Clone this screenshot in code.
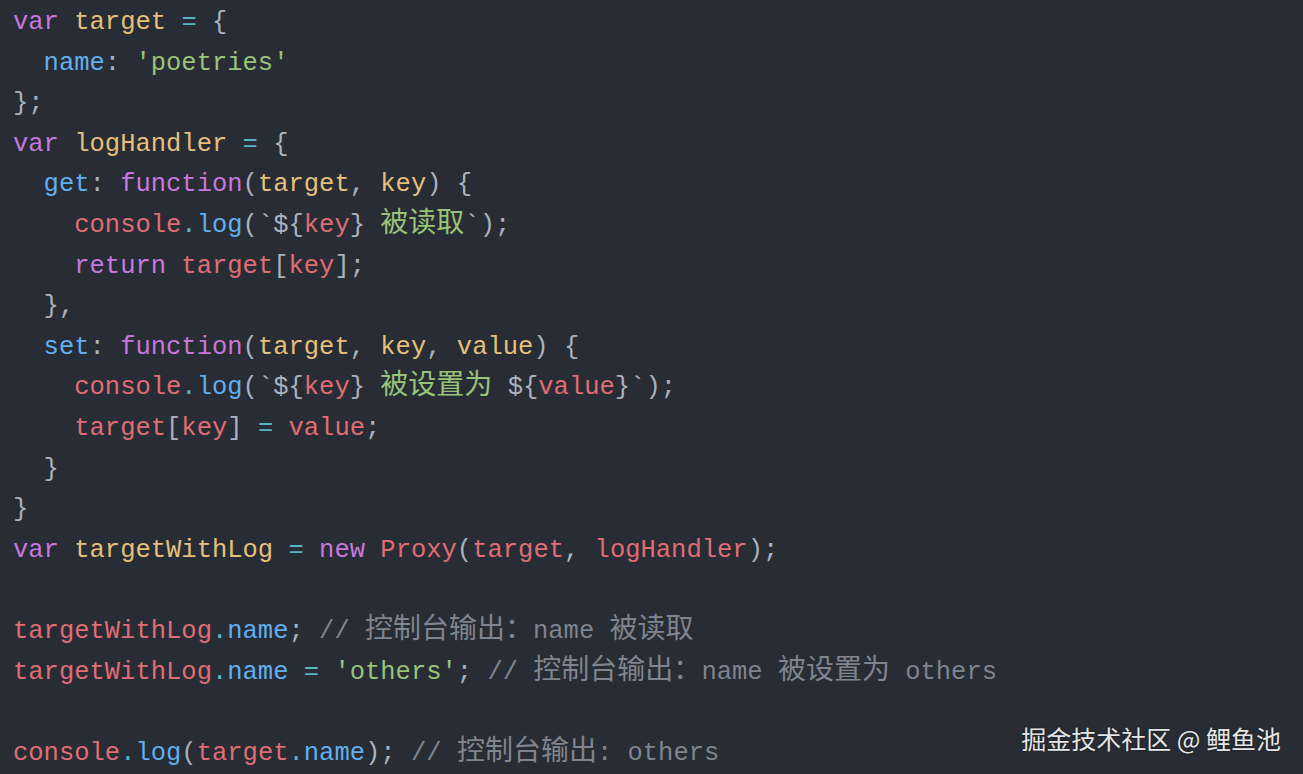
import React from "react";

type Tok = [string, string];

const K = "text-[#c678dd]"; // keyword purple
const Y = "text-[#e5c07b]"; // yellow
const C = "text-[#56b6c2]"; // cyan
const P = "text-[#abb2bf]"; // punct
const B = "text-[#61afef]"; // blue
const G = "text-[#98c379]"; // green
const R = "text-[#e06c75]"; // red
const M = "text-[#7f848e]"; // comment

const lines: Tok[][] = [
  [[K, "var"], [P, " "], [Y, "target"], [P, " "], [C, "="], [P, " {"]],
  [[P, "  "], [B, "name"], [P, ": "], [G, "'poetries'"]],
  [[P, "};"]],
  [[K, "var"], [P, " "], [Y, "logHandler"], [P, " "], [C, "="], [P, " {"]],
  [[P, "  "], [B, "get"], [P, ": "], [K, "function"], [P, "("], [Y, "target"], [P, ", "], [Y, "key"], [P, ") {"]],
  [[P, "    "], [R, "console"], [C, "."], [B, "log"], [P, "(`${"], [R, "key"], [P, "}"], [G, " 被读取"], [P, "`);"]],
  [[P, "    "], [K, "return"], [P, " "], [R, "target"], [P, "["], [R, "key"], [P, "];"]],
  [[P, "  },"]],
  [[P, "  "], [B, "set"], [P, ": "], [K, "function"], [P, "("], [Y, "target"], [P, ", "], [Y, "key"], [P, ", "], [Y, "value"], [P, ") {"]],
  [[P, "    "], [R, "console"], [C, "."], [B, "log"], [P, "(`${"], [R, "key"], [P, "}"], [G, " 被设置为 "], [P, "${"], [R, "value"], [P, "}`);"]],
  [[P, "    "], [R, "target"], [P, "["], [R, "key"], [P, "] "], [C, "="], [P, " "], [R, "value"], [P, ";"]],
  [[P, "  }"]],
  [[P, "}"]],
  [[K, "var"], [P, " "], [Y, "targetWithLog"], [P, " "], [C, "="], [P, " "], [K, "new"], [P, " "], [R, "Proxy"], [P, "("], [R, "target"], [P, ", "], [R, "logHandler"], [P, ");"]],
  [],
  [[R, "targetWithLog"], [C, "."], [B, "name"], [P, "; "], [M, "// 控制台输出：name 被读取"]],
  [[R, "targetWithLog"], [C, "."], [B, "name"], [P, " "], [C, "="], [P, " "], [G, "'others'"], [P, "; "], [M, "// 控制台输出：name 被设置为 others"]],
  [],
  [[R, "console"], [C, "."], [B, "log"], [P, "("], [R, "target"], [C, "."], [B, "name"], [P, "); "], [M, "// 控制台输出: others"]],
];

const cjkRe = /([\u3000-\u9fff\uff00-\uffef]+)/;

function renderText(text: string) {
  const parts = text.split(cjkRe);
  return parts.map((p, i) =>
    cjkRe.test(p) ? (
      <span
        key={i}
        className="text-[28px] leading-none [font-family:'Noto_Sans_CJK_SC',sans-serif]"
      >
        {p}
      </span>
    ) : (
      <React.Fragment key={i}>{p}</React.Fragment>
    )
  );
}

export default function App() {
  return (
    <div className="relative w-[1303px] h-[774px] overflow-hidden bg-[#282c34]">
      <div className="pl-[13px] pt-[3px] text-[25.5px] [font-family:'Liberation_Mono',monospace]">
        {lines.map((ln, i) => (
          <div key={i} className="h-[40.6px] leading-[40.6px] whitespace-pre">
            {ln.map(([cls, t], j) => (
              <span key={j} className={cls}>
                {renderText(t)}
              </span>
            ))}
          </div>
        ))}
      </div>
      <div className="absolute right-[22px] bottom-[20px] text-[25px] leading-[32px] text-[#e6e6e6] [font-family:'Noto_Sans_CJK_SC',sans-serif] [text-shadow:0_0_2px_rgba(0,0,0,0.6)]">
        掘金技术社区 @ 鲤鱼池
      </div>
    </div>
  );
}
